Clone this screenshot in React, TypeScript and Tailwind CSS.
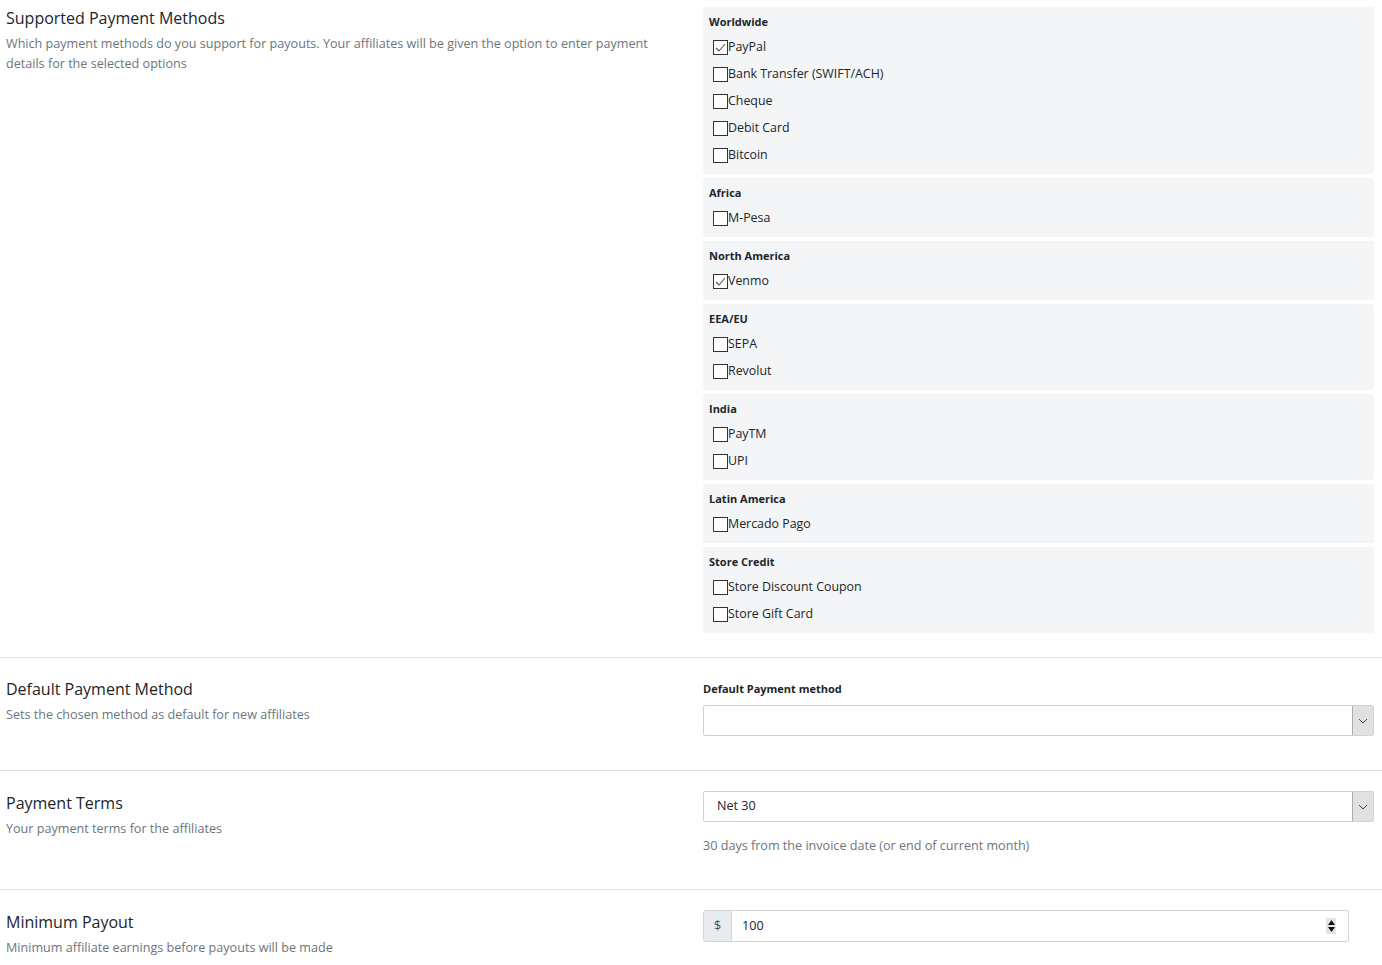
import React from "react";

type Item = { label: string; checked?: boolean };
type Group = { title: string; items: Item[] };

const groups: Group[] = [
  {
    title: "Worldwide",
    items: [
      { label: "PayPal", checked: true },
      { label: "Bank Transfer (SWIFT/ACH)" },
      { label: "Cheque" },
      { label: "Debit Card" },
      { label: "Bitcoin" },
    ],
  },
  { title: "Africa", items: [{ label: "M-Pesa" }] },
  { title: "North America", items: [{ label: "Venmo", checked: true }] },
  { title: "EEA/EU", items: [{ label: "SEPA" }, { label: "Revolut" }] },
  { title: "India", items: [{ label: "PayTM" }, { label: "UPI" }] },
  { title: "Latin America", items: [{ label: "Mercado Pago" }] },
  {
    title: "Store Credit",
    items: [{ label: "Store Discount Coupon" }, { label: "Store Gift Card" }],
  },
];

function Checkbox({ checked }: { checked?: boolean }) {
  return (
    <span className="w-[15px] h-[15px] mt-[2px] border border-[#333333] bg-white flex items-center justify-center shrink-0">
      {checked && (
        <svg width="13" height="13" viewBox="0 0 13 13">
          <path d="M2 7 L5 10 L11 3" fill="none" stroke="#555" strokeWidth="1.1" />
        </svg>
      )}
    </span>
  );
}

function Chevron() {
  return (
    <svg width="10" height="6" viewBox="0 0 10 6">
      <path d="M1 1 L5 5 L9 1" fill="none" stroke="#444" strokeWidth="1" />
    </svg>
  );
}

function SectionLeft({ title, desc }: { title: string; desc: string }) {
  return (
    <div className="w-[703px] shrink-0 pl-[6px] pr-[30px]">
      <div className="text-[16px] leading-[24px] text-[#212529]">{title}</div>
      <div className="text-[12.6px] leading-[20px] text-[#6c757d] mt-[4px]">{desc}</div>
    </div>
  );
}

export default function App() {
  return (
    <div
      className="w-[1382px] bg-white"
      style={{ fontFamily: '"Open Sans", "Noto Sans", sans-serif' }}
    >
      {/* Section 1 */}
      <div className="flex pt-[6px] pb-[24px] border-b border-[#dee2e6]">
        <SectionLeft
          title="Supported Payment Methods"
          desc="Which payment methods do you support for payouts. Your affiliates will be given the option to enter payment details for the selected options"
        />
        <div className="w-[671px] flex flex-col gap-[4px] pt-[1px]">
          {groups.map((g) => (
            <div key={g.title} className="bg-[#f4f5f7] rounded-[3px] pt-[8px] pb-[6px] px-[6px]">
              <div className="text-[11px] leading-[14px] font-bold text-[#212529] mb-[4px]">
                {g.title}
              </div>
              {g.items.map((it) => (
                <div key={it.label} className="h-[27px] flex items-center pl-[4px]">
                  <Checkbox checked={it.checked} />
                  <span className="text-[12.4px] text-[#212529] leading-[18px] mt-[1px]">{it.label}</span>
                </div>
              ))}
            </div>
          ))}
        </div>
      </div>

      {/* Section 2 */}
      <div className="flex pt-[19px] pb-[34px] border-b border-[#dee2e6]">
        <SectionLeft
          title="Default Payment Method"
          desc="Sets the chosen method as default for new affiliates"
        />
        <div className="w-[671px]">
          <div className="text-[11px] leading-[24px] font-bold text-[#212529]">
            Default Payment method
          </div>
          <div className="mt-[4px] h-[31px] border border-[#cfd3d7] rounded-[2px] bg-white flex justify-end">
            <div className="w-[21px] h-full bg-[#e1e1e1] border-l border-[#adadad] flex items-center justify-center">
              <Chevron />
            </div>
          </div>
        </div>
      </div>

      {/* Section 3 */}
      <div className="flex pt-[20px] pb-[33px] border-b border-[#dee2e6]">
        <SectionLeft title="Payment Terms" desc="Your payment terms for the affiliates" />
        <div className="w-[671px]">
          <div className="h-[31px] border border-[#cfd3d7] rounded-[2px] bg-white flex items-center justify-between">
            <span className="pl-[13px] text-[12.6px] text-[#212529]">Net 30</span>
            <div className="w-[21px] h-full bg-[#e1e1e1] border-l border-[#adadad] flex items-center justify-center">
              <Chevron />
            </div>
          </div>
          <div className="mt-[14px] text-[12.6px] leading-[20px] text-[#6c757d]">
            30 days from the invoice date (or end of current month)
          </div>
        </div>
      </div>

      {/* Section 4 */}
      <div className="flex pt-[20px] pb-[16px]">
        <SectionLeft
          title="Minimum Payout"
          desc="Minimum affiliate earnings before payouts will be made"
        />
        <div className="w-[646px] flex h-[32px]">
          <div className="w-[29px] bg-[#e9ecef] border border-[#ced4da] rounded-l-[3px] flex items-center justify-center text-[12.6px] text-[#495057]">
            $
          </div>
          <div className="flex-1 border border-l-0 border-[#ced4da] rounded-r-[3px] bg-white flex items-center justify-between pl-[10px] pr-[12px]">
            <span className="text-[12.6px] text-[#212529]">100</span>
            <div className="w-[10px] h-[16px] bg-[#e5e5e5] flex flex-col items-center justify-center gap-[2px]">
              <svg width="7" height="5" viewBox="0 0 7 5">
                <path d="M0 5 L3.5 0 L7 5 Z" fill="#111" />
              </svg>
              <svg width="7" height="5" viewBox="0 0 7 5">
                <path d="M0 0 L3.5 5 L7 0 Z" fill="#111" />
              </svg>
            </div>
          </div>
        </div>
      </div>
    </div>
  );
}
